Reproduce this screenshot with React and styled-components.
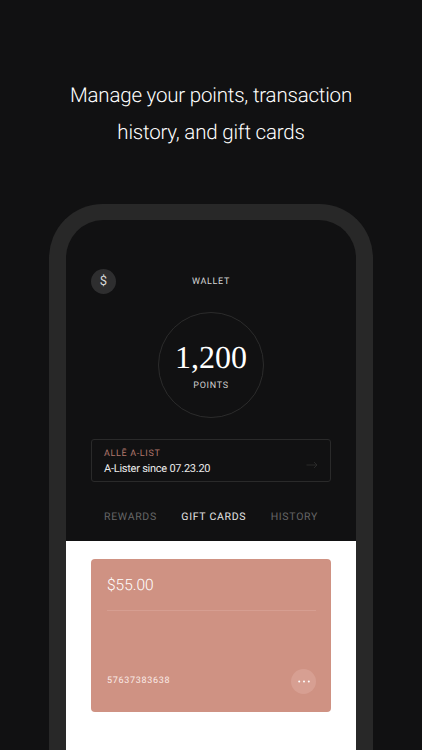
import React from "react";
import styled, { createGlobalStyle } from "styled-components";

const Global = createGlobalStyle`
  html, body {
    margin: 0;
    padding: 0;
    background: #111112;
    text-rendering: geometricPrecision;
  }
`;

const Page = styled.div`
  width: 422px;
  height: 750px;
  overflow: hidden;
  background: #111112;
  font-family: Roboto, "Liberation Sans", sans-serif;
  display: flex;
  flex-direction: column;
  align-items: center;
`;

const Headline = styled.h1`
  margin: 78px 0 53px;
  font-size: 20.5px;
  line-height: 36.5px;
  font-weight: 300;
  color: #fff;
  text-align: center;
  letter-spacing: -0.2px;
`;

const Phone = styled.div`
  box-sizing: border-box;
  flex: 1;
  width: 324px;
  border: 17px solid #282828;
  border-top-width: 16px;
  border-bottom: none;
  border-radius: 54px 54px 0 0;
  display: flex;
  flex-direction: column;
  overflow: hidden;
`;

const Dark = styled.div`
  box-sizing: border-box;
  height: 321px;
  padding: 49px 25px 0;
  display: flex;
  flex-direction: column;
  align-items: stretch;
`;

const TopBar = styled.div`
  position: relative;
  height: 25px;
  display: flex;
  align-items: center;
  justify-content: center;
`;

const DollarBtn = styled.div`
  position: absolute;
  left: 0;
  top: 0;
  width: 25px;
  height: 25px;
  border-radius: 50%;
  background: #2e2e2f;
  color: #d8d8d8;
  font-size: 13px;
  display: flex;
  align-items: center;
  justify-content: center;
`;

const BarTitle = styled.div`
  font-size: 9px;
  letter-spacing: 0.7px;
  color: #d6d6d6;
`;

const PointsRing = styled.div`
  box-sizing: border-box;
  align-self: center;
  width: 106px;
  height: 106px;
  margin-top: 18px;
  border: 1px solid #2c2c2c;
  border-radius: 50%;
  display: flex;
  flex-direction: column;
  align-items: center;
`;

const PointsValue = styled.div`
  margin-top: 25px;
  font-family: "Liberation Serif", serif;
  font-size: 32px;
  line-height: 38px;
  color: #fff;
`;

const PointsLabel = styled.div`
  margin-top: 5px;
  font-size: 9px;
  letter-spacing: 0.7px;
  color: #d0d0d0;
`;

const ListBox = styled.div`
  box-sizing: border-box;
  height: 43px;
  margin-top: 21px;
  padding: 8px 12px 0 12px;
  border: 1px solid #2a2a2a;
  border-radius: 3px;
  display: flex;
  align-items: center;
  justify-content: space-between;
`;

const ListText = styled.div`
  margin-top: -6px;
`;

const ListLabel = styled.div`
  font-size: 9px;
  line-height: 12px;
  letter-spacing: 0.65px;
  color: #b0776c;
`;

const ListValue = styled.div`
  margin-top: 2px;
  font-size: 11px;
  line-height: 14px;
  letter-spacing: -0.25px;
  color: #ececec;
`;

const Tabs = styled.div`
  margin-top: 28px;
  padding: 0 13px;
  display: flex;
  justify-content: space-between;
`;

const Tab = styled.div`
  font-size: 10.5px;
  line-height: 13px;
  letter-spacing: 0.7px;
  color: ${({ $active }) => ($active ? "#e4e4e4" : "#666667")};
`;

const Light = styled.div`
  flex: 1;
  background: #fff;
  padding: 18px 25px 0;
`;

const GiftCard = styled.div`
  box-sizing: border-box;
  height: 153px;
  padding: 17px 15px 0 16px;
  border-radius: 4px;
  background: #cf9283;
  display: flex;
  flex-direction: column;
`;

const Amount = styled.div`
  font-size: 15.5px;
  line-height: 19px;
  font-weight: 300;
  color: #fff;
  padding-bottom: 15px;
  border-bottom: 1px solid #d69e91;
`;

const CardFoot = styled.div`
  margin-top: 58px;
  display: flex;
  align-items: center;
  justify-content: space-between;
`;

const CardNumber = styled.div`
  font-size: 9px;
  letter-spacing: 0.7px;
  color: #fbece8;
  margin-top: -1px;
`;

const MoreBtn = styled.div`
  width: 25px;
  height: 25px;
  border-radius: 50%;
  background: #d79f92;
  display: flex;
  align-items: center;
  justify-content: center;
`;

const ArrowIcon = () => (
  <svg width="12" height="8" viewBox="0 0 12 8" fill="none" stroke="#2c2c2d" strokeWidth="0.9">
    <path d="M0.5 4H11M8 1l3 3-3 3" />
  </svg>
);

const DotsIcon = () => (
  <svg width="12" height="3" viewBox="0 0 12 3" fill="#fff">
    <circle cx="1.2" cy="1.5" r="1" />
    <circle cx="6" cy="1.5" r="1" />
    <circle cx="10.8" cy="1.5" r="1" />
  </svg>
);

export default function App() {
  return (
    <Page>
      <Global />
      <Headline>
        Manage your points, transaction
        <br />
        history, and gift cards
      </Headline>
      <Phone>
        <Dark>
          <TopBar>
            <DollarBtn>$</DollarBtn>
            <BarTitle>WALLET</BarTitle>
          </TopBar>
          <PointsRing>
            <PointsValue>1,200</PointsValue>
            <PointsLabel>POINTS</PointsLabel>
          </PointsRing>
          <ListBox>
            <ListText>
              <ListLabel>ALLĒ A-LIST</ListLabel>
              <ListValue>A-Lister since 07.23.20</ListValue>
            </ListText>
            <ArrowIcon />
          </ListBox>
          <Tabs>
            <Tab>REWARDS</Tab>
            <Tab $active>GIFT CARDS</Tab>
            <Tab>HISTORY</Tab>
          </Tabs>
        </Dark>
        <Light>
          <GiftCard>
            <Amount>$55.00</Amount>
            <CardFoot>
              <CardNumber>57637383638</CardNumber>
              <MoreBtn>
                <DotsIcon />
              </MoreBtn>
            </CardFoot>
          </GiftCard>
        </Light>
      </Phone>
    </Page>
  );
}
